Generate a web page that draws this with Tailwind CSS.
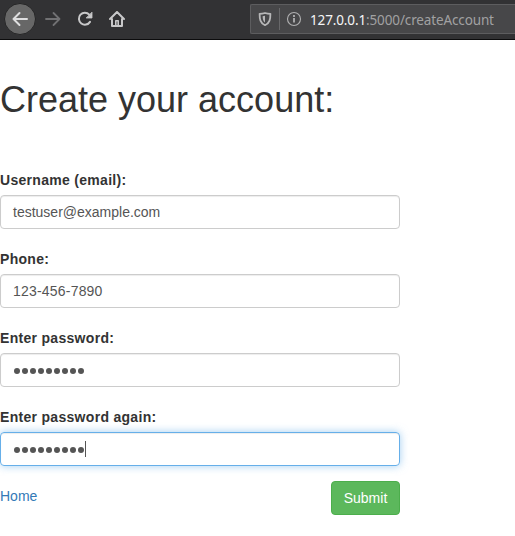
<!DOCTYPE html>
<html lang="en">
<head>
<meta charset="utf-8">
<title>Create your account</title>
<script src="https://cdn.jsdelivr.net/npm/@tailwindcss/browser@4"></script>
</head>
<body class="h-[536px] overflow-hidden bg-white font-['Liberation_Sans',Arial,sans-serif] text-[14px] leading-[20px] text-[#333333]">
<header class="flex h-10 items-start overflow-hidden border-b border-[#0c0c0d] bg-[#323234]">
  <nav class="flex w-[250px] shrink-0 items-start pt-[3px] pl-1">
    <span class="flex size-8 items-center justify-center rounded-full border border-[#252526] bg-[#676767]">
      <svg class="size-4" viewBox="0 0 16 16" fill="none" stroke="#dededf" stroke-width="2" stroke-linecap="round" stroke-linejoin="round"><path d="M15 8H1.5M7.5 2l-6 6 6 6"/></svg>
    </span>
    <span class="ml-[9px] flex h-8 items-center"><svg class="size-4" viewBox="0 0 16 16" fill="none" stroke="#717173" stroke-width="1.8" stroke-linecap="round" stroke-linejoin="round"><path d="M1 8h13.5M8.5 2l6 6-6 6"/></svg></span>
    <span class="ml-4 flex h-8 items-center"><svg class="size-4" viewBox="0 0 16 16" fill="none" stroke="#c8c8c9" stroke-width="2" stroke-linecap="round" stroke-linejoin="round"><path d="M12.3 3.6A6 6 0 1 0 13 10.9"/><path d="M15 1.5v5.5H9.5z" fill="#c8c8c9" stroke-width=".8"/></svg></span>
    <span class="ml-4 flex h-8 items-center"><svg class="size-4" viewBox="0 0 16 16" fill="none" stroke="#c8c8c9" stroke-width="2" stroke-linecap="round" stroke-linejoin="round"><path d="M1 8l7-7 7 7M3 8v7h10V8"/><path d="M6.8 14.5V9.8h2.4v4.7" stroke-width="1.6"/></svg></span>
  </nav>
  <div class="mt-1 flex h-[30px] flex-1 items-center rounded-l-[2px] border border-r-0 border-[#5d5d5f] bg-[#474749] pl-[6px]">
    <svg class="size-4" viewBox="0 0 16 16" fill="none" stroke="#b7b7b8" stroke-width="1.8" stroke-linejoin="round"><path d="M8 2C6 2.6 4.4 2.8 2.6 2.8c0 5.2.5 9.2 5.4 11.4 4.900-2.200 5.400-6.200 5.400-11.400C11.600 2.800 10 2.600 8 2z"/><path d="M8 4.800v6.700C6.200 10.300 5.700 8.300 5.600 5.200z" fill="#b7b7b8" stroke="none"/></svg>
    <span class="ml-[6px] h-[22px] w-px bg-[#68686a]"></span>
    <svg class="ml-[6px] size-4 shrink-0" viewBox="0 0 16 16" fill="none" stroke="#b0b0b1"><circle cx="8" cy="8" r="6.5" stroke-width="1.1"/><path d="M8 7v4.5M8 4v2" stroke-width="1.8"/></svg>
    <span class="ml-[8px] pt-[2px] font-['Noto_Sans','Open_Sans',sans-serif] text-[13.5px] tracking-[-0.13px] whitespace-nowrap text-[#a1a1a2]"><span class="text-[#f5f5f6]">127.0.0.1</span>:5000/createAccount</span>
  </div>
</header>
<main class="w-[400px] pt-10">
  <h1 class="h-[40px] text-[36px] leading-[40px] font-normal whitespace-nowrap">Create your account:</h1>
  <form class="mt-[50px]">
    <label class="mb-[5px] block font-bold tracking-[0.3px]">Username (email):</label>
    <div class="mb-5 flex h-[34px] items-center rounded-[4px] border border-[#cccccc] px-3 text-[#555555] shadow-[inset_0_1px_1px_rgba(0,0,0,0.075)]">testuser@example.com</div>
    <label class="mb-[5px] block font-bold tracking-[0.3px]">Phone:</label>
    <div class="mb-5 flex h-[34px] items-center rounded-[4px] border border-[#cccccc] px-3 tracking-[0.2px] text-[#555555] shadow-[inset_0_1px_1px_rgba(0,0,0,0.075)]">123-456-7890</div>
    <label class="mb-[5px] block font-bold tracking-[0.3px]">Enter password:</label>
    <div class="mb-5 flex h-[34px] items-center gap-[2px] rounded-[4px] border border-[#cccccc] px-[13px] pt-[2px] shadow-[inset_0_1px_1px_rgba(0,0,0,0.075)]">
      <i class="size-[6px] rounded-full bg-[#555555]"></i><i class="size-[6px] rounded-full bg-[#555555]"></i><i class="size-[6px] rounded-full bg-[#555555]"></i><i class="size-[6px] rounded-full bg-[#555555]"></i><i class="size-[6px] rounded-full bg-[#555555]"></i><i class="size-[6px] rounded-full bg-[#555555]"></i><i class="size-[6px] rounded-full bg-[#555555]"></i><i class="size-[6px] rounded-full bg-[#555555]"></i><i class="size-[6px] rounded-full bg-[#555555]"></i>
    </div>
    <label class="mb-[5px] block font-bold tracking-[0.3px]">Enter password again:</label>
    <div class="mb-[15px] flex h-[34px] items-center rounded-[4px] border border-[#66afe9] px-[13px] shadow-[inset_0_1px_1px_rgba(0,0,0,0.075),0_0_8px_rgba(102,175,233,0.6)]">
      <div class="flex gap-[2px] pt-[2px]"><i class="size-[6px] rounded-full bg-[#555555]"></i><i class="size-[6px] rounded-full bg-[#555555]"></i><i class="size-[6px] rounded-full bg-[#555555]"></i><i class="size-[6px] rounded-full bg-[#555555]"></i><i class="size-[6px] rounded-full bg-[#555555]"></i><i class="size-[6px] rounded-full bg-[#555555]"></i><i class="size-[6px] rounded-full bg-[#555555]"></i><i class="size-[6px] rounded-full bg-[#555555]"></i><i class="size-[6px] rounded-full bg-[#555555]"></i></div>
      <span class="ml-[1px] h-4 w-px bg-[#555555]"></span>
    </div>
    <div class="flex items-start justify-between">
      <a class="mt-[5px] text-[#337ab7]">Home</a>
      <button type="button" class="h-[34px] w-[69px] rounded-[4px] border border-[#4cae4c] bg-[#5cb85c] text-white">Submit</button>
    </div>
  </form>
</main>
</body>
</html>
